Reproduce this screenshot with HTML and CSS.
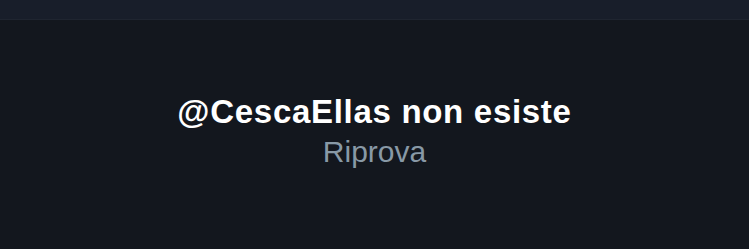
FILE: index.html
```html
<!DOCTYPE html>
<html lang="it">
<head>
<meta charset="utf-8">
<link rel="stylesheet" href="styles.css">
</head>
<body>
<div class="app">
  <header class="topbar"></header>
  <main class="empty">
    <h1 class="title">@CescaEllas non esiste</h1>
    <p class="retry">Riprova</p>
  </main>
</div>
</body>
</html>
```
FILE: styles.css
```css
html, body {
  margin: 0;
  padding: 0;
  background: #13171e;
}
.app {
  width: 749px;
  height: 249px;
  display: flex;
  flex-direction: column;
  background: #13171e;
  font-family: "Liberation Sans", Arial, sans-serif;
}
.topbar {
  height: 19px;
  background: #181e2a;
  border-bottom: 1px solid #1f2530;
}
.empty {
  display: flex;
  flex-direction: column;
  align-items: center;
  padding-top: 72px;
}
.title {
  margin: 0;
  font-size: 33px;
  font-weight: 700;
  line-height: 40px;
  color: #ffffff;
  letter-spacing: 0.7px;
}
.retry {
  margin: 1px 0 0;
  font-size: 30px;
  line-height: 38px;
  color: #8899a6;
}
```
